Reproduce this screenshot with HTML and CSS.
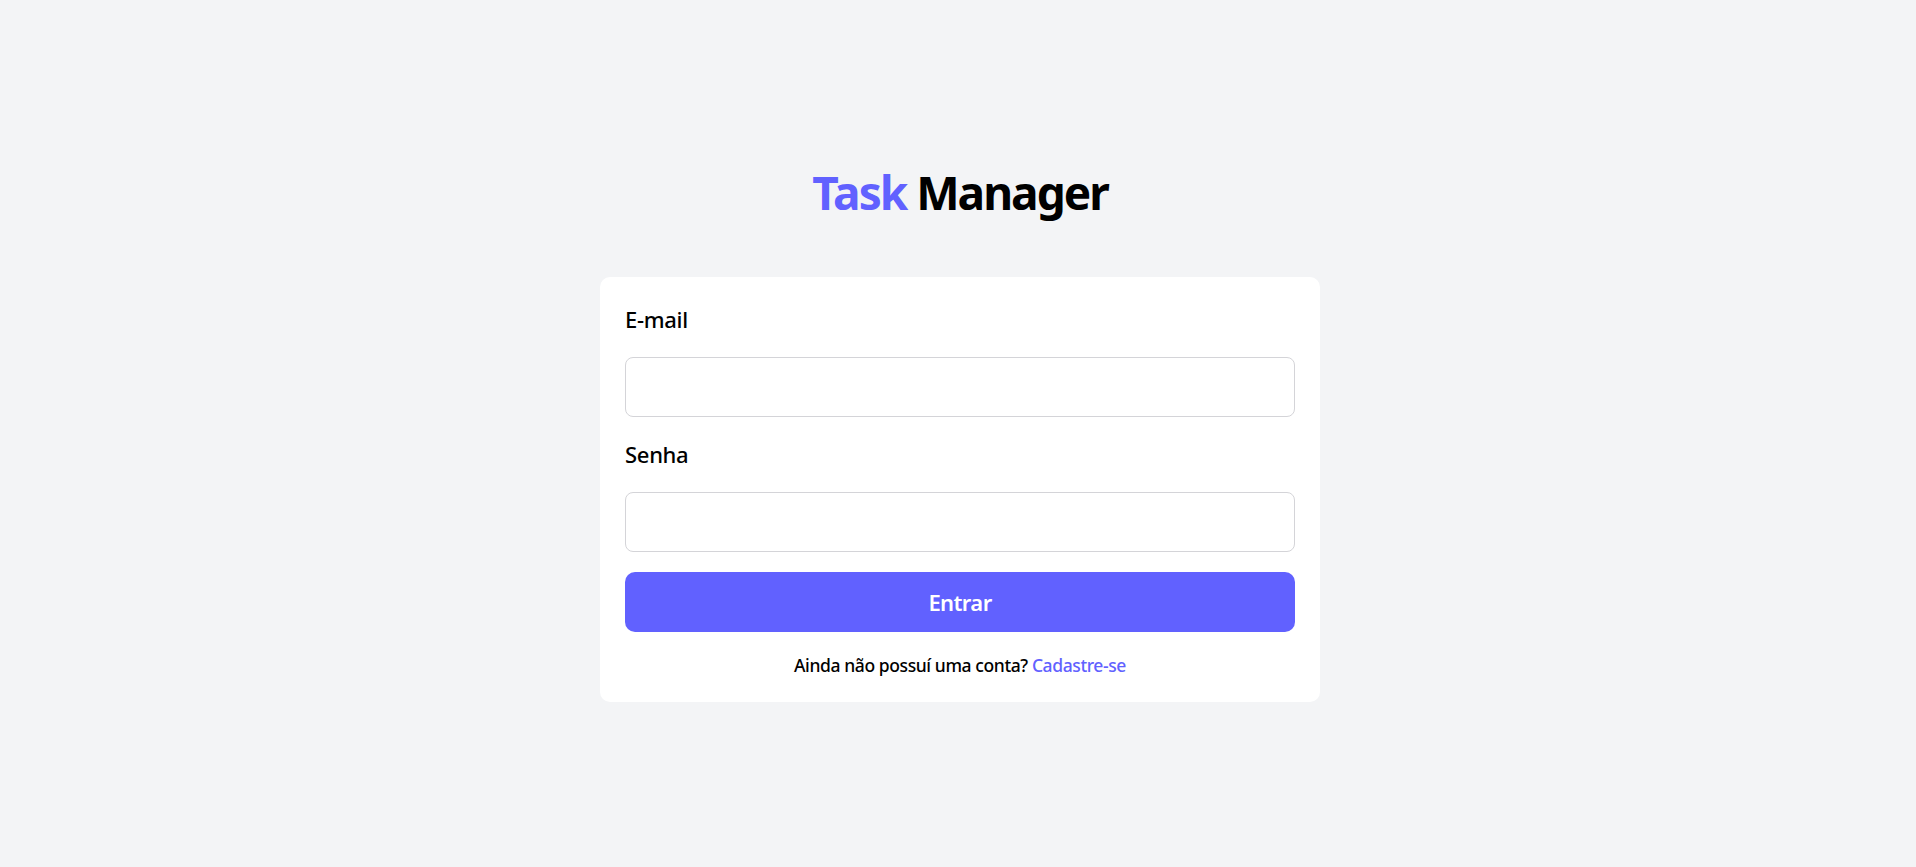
FILE: index.html
```html
<!DOCTYPE html>
<html lang="pt-BR">
<head>
<meta charset="utf-8">
<title>Task Manager</title>
<link rel="stylesheet" href="styles.css">
</head>
<body>
<main class="page">
  <h1 class="title"><span class="title-accent">Task</span> Manager</h1>
  <form class="card">
    <div class="field">
      <label class="label" for="email">E-mail</label>
      <input class="input" id="email" type="email">
    </div>
    <div class="field">
      <label class="label" for="senha">Senha</label>
      <input class="input" id="senha" type="password">
    </div>
    <button class="button" type="button">Entrar</button>
    <p class="footer">Ainda não possuí uma conta? <a class="link" href="#">Cadastre-se</a></p>
  </form>
</main>
</body>
</html>
```

FILE: styles.css
```css
* {
  box-sizing: border-box;
}

html, body {
  margin: 0;
  padding: 0;
}

body {
  background: #f3f4f6;
  font-family: "Noto Sans", "Open Sans", sans-serif;
  color: #000;
}

.page {
  display: flex;
  flex-direction: column;
  align-items: center;
  padding-top: 164px;
  padding-left: 4px;
  min-height: 100vh;
}

.title {
  margin: 0;
  font-size: 46px;
  line-height: 56px;
  font-weight: 700;
  letter-spacing: -2px;
  color: #000;
}

.title-accent {
  color: #6161ff;
}

.card {
  margin-top: 57px;
  width: 720px;
  background: #fff;
  border-radius: 10px;
  padding: 25px;
  display: flex;
  flex-direction: column;
  gap: 20px;
}

.field {
  display: flex;
  flex-direction: column;
  gap: 21px;
}

.label {
  font-size: 22px;
  line-height: 34px;
  font-weight: 500;
  letter-spacing: -0.3px;
}

.input {
  height: 60px;
  border: 1px solid #d4d4d8;
  border-radius: 8px;
  background: #fff;
  font: inherit;
  font-size: 18px;
  padding: 0 16px;
  outline: none;
}

.button {
  height: 60px;
  border: none;
  border-radius: 10px;
  background: #6161ff;
  color: #fff;
  font-family: inherit;
  font-size: 22px;
  font-weight: 600;
  letter-spacing: -0.6px;
  cursor: pointer;
}

.footer {
  margin: 1px 0 0;
  text-align: center;
  font-size: 17.5px;
  line-height: 24px;
  font-weight: 500;
  letter-spacing: -0.4px;
}

.link {
  color: #6161ff;
  text-decoration: none;
}
```
